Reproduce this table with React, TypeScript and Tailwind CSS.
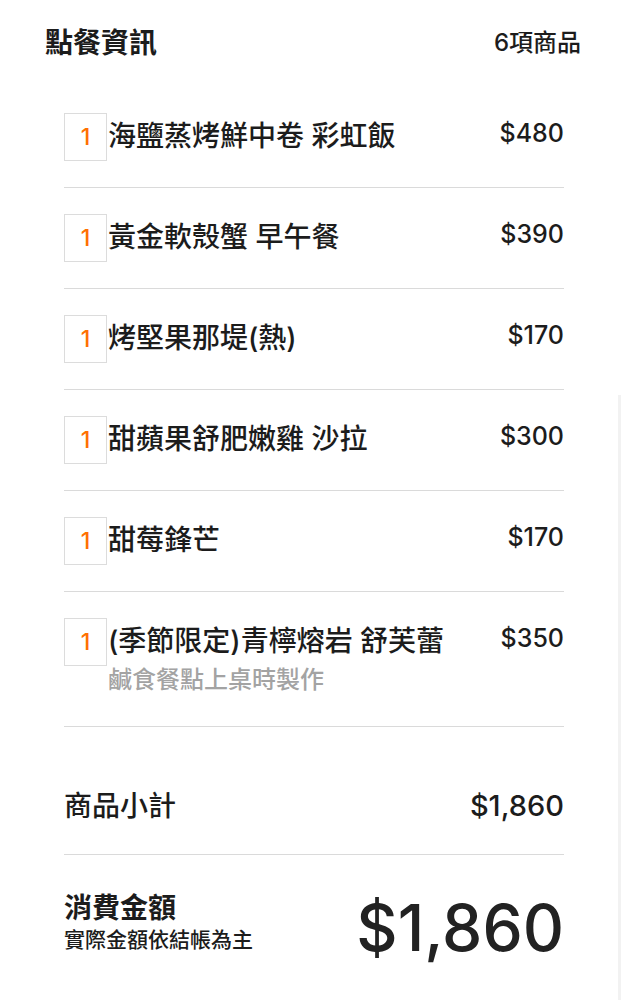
const ITEMS = [
  { qty: 1, name: '海鹽蒸烤鮮中卷 彩虹飯', price: 480 },
  { qty: 1, name: '黃金軟殼蟹 早午餐', price: 390 },
  { qty: 1, name: '烤堅果那堤(熱)', price: 170 },
  { qty: 1, name: '甜蘋果舒肥嫩雞 沙拉', price: 300 },
  { qty: 1, name: '甜莓鋒芒', price: 170 },
  {
    qty: 1,
    name: '(季節限定)青檸熔岩 舒芙蕾',
    price: 350,
    note: '鹹食餐點上桌時製作',
  },
];

const money = (n: number) => `$${n.toLocaleString('en-US')}`;

export default function App() {
  const subtotal = ITEMS.reduce((sum, item) => sum + item.price * item.qty, 0);

  return (
    <div className="relative min-h-[1000px] w-full bg-white text-[#1c1c1c] font-['Inter','Noto_Sans_CJK_TC',sans-serif]">
      {/* scroll track */}
      <div className="absolute right-[7px] top-[395px] bottom-0 w-[3px] bg-[#f2f2f2]" />

      {/* Header */}
      <div className="flex items-center justify-between pl-[45px] pr-[47px] pt-[24px]">
        <h2 className="text-[28px] leading-[38px] font-bold">點餐資訊</h2>
        <span className="text-[24px] leading-[38px] font-medium">
          {ITEMS.length}項商品
        </span>
      </div>

      {/* Items */}
      <div className="mx-[64px] mt-[25px]">
        {ITEMS.map((item, i) => (
          <div
            key={i}
            className={`flex items-start border-b border-[#dadada] pt-[26px] ${
              item.note ? 'pb-[31px]' : 'pb-[26px]'
            }`}
          >
            <div className="flex h-[48px] w-[43px] shrink-0 items-center justify-center border border-[#dcdcdc] text-[23px] font-medium text-[#ff7000]">
              {item.qty}
            </div>
            <div className="flex-1 pl-[1px]">
              <p className="text-[28px] leading-[47px] font-medium">
                {item.name}
              </p>
              {item.note && (
                <p className="text-[24px] leading-[30px] font-medium text-[#a3a3a3]">
                  {item.note}
                </p>
              )}
            </div>
            <span className="pt-[1px] text-[25px] leading-[38px] font-medium">
              {money(item.price)}
            </span>
          </div>
        ))}

        {/* Subtotal */}
        <div className="flex items-center justify-between border-b border-[#dadada] pt-[59px] pb-[28px]">
          <span className="text-[28px] leading-[40px] font-medium">商品小計</span>
          <span className="text-[29px] leading-[40px] font-medium">
            {money(subtotal)}
          </span>
        </div>

        {/* Total */}
        <div className="flex items-start justify-between pt-[35px]">
          <div>
            <p className="text-[28px] leading-[36px] font-bold">消費金額</p>
            <p className="text-[21px] leading-[28px] font-medium">
              實際金額依結帳為主
            </p>
          </div>
          <span className="mt-[6px] text-[64px] leading-[64px] font-medium text-[#222]">
            {money(subtotal)}
          </span>
        </div>
      </div>
    </div>
  );
}
